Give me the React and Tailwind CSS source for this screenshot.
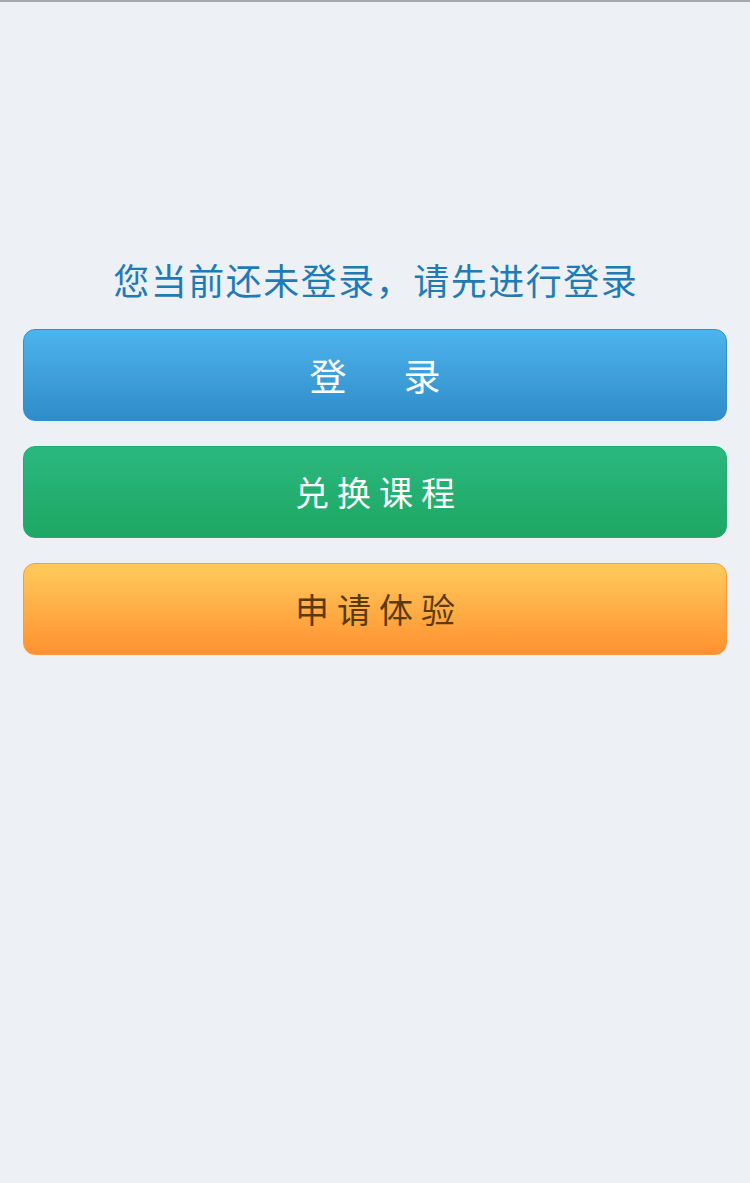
export default function App() {
  return (
    <div
      className="min-h-[1183px] w-[750px] bg-[#edf0f5] border-t-2 border-[#a6a7ab] flex flex-col items-center"
      style={{ fontFamily: '"Noto Sans CJK SC", "Noto Sans", sans-serif' }}
    >
      <div className="mt-[257px] h-[40px] flex items-center text-[36px] leading-[40px] tracking-[1.5px] pl-[1.5px] text-[#1f7bb6]">
        您当前还未登录，请先进行登录
      </div>
      <div className="mt-[30px] w-[704px] flex flex-col gap-[25px]">
        <button className="h-[92px] w-full rounded-[12px] border border-[#2f8fd6] bg-gradient-to-b from-[#4db4ec] to-[#2f8cc8] flex items-center justify-center gap-[57px] text-white text-[37px] leading-none">
          <span>登</span>
          <span>录</span>
        </button>
        <button className="h-[92px] w-full rounded-[12px] border border-[#25a873] bg-gradient-to-b from-[#2bb87f] to-[#1ea764] flex items-center justify-center text-white text-[34px] leading-none tracking-[8px] pl-[8px]">
          兑换课程
        </button>
        <button className="h-[92px] w-full rounded-[12px] border border-[#ff9a3c] bg-gradient-to-b from-[#ffca5b] to-[#ff912f] flex items-center justify-center text-[#5a3a08] text-[34px] leading-none tracking-[8px] pl-[8px]">
          申请体验
        </button>
      </div>
    </div>
  );
}
